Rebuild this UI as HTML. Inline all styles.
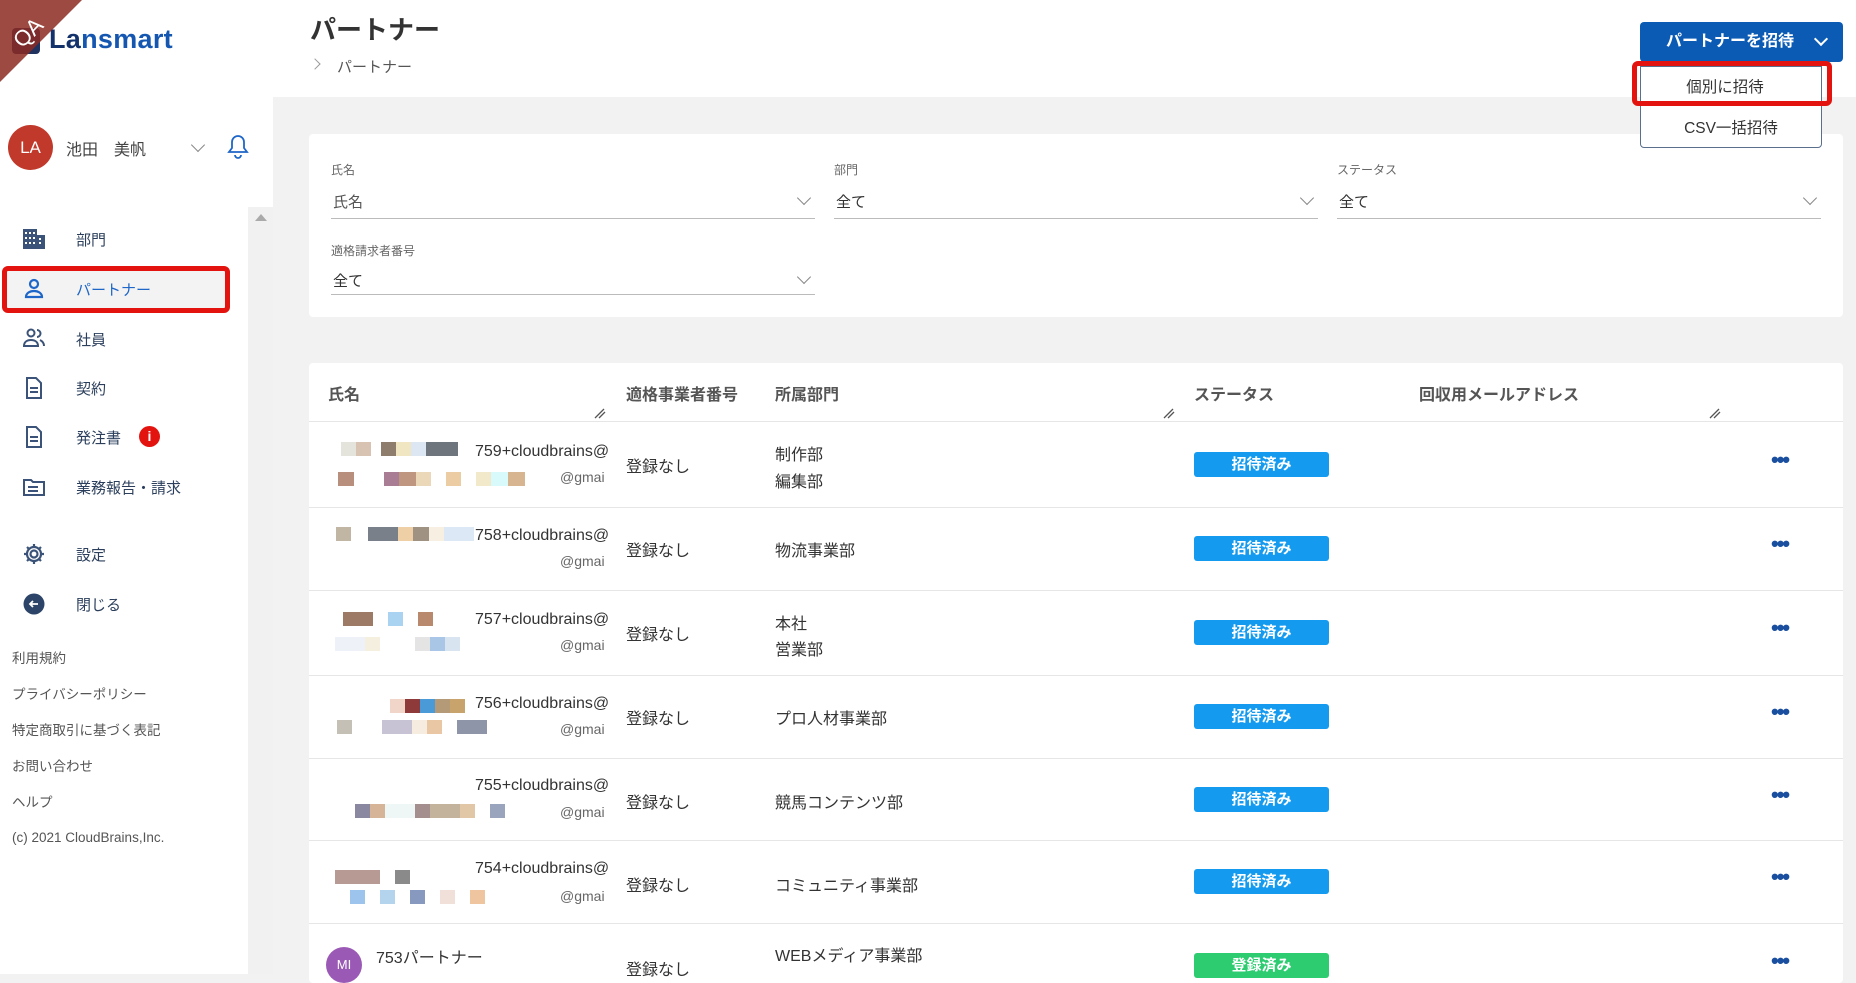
<!DOCTYPE html>
<html><head><meta charset="utf-8"><style>
*{margin:0;padding:0;box-sizing:border-box}
body{width:1856px;height:974px;overflow:hidden;background:#f2f2f2;font-family:"Liberation Sans","Noto Sans CJK JP",sans-serif;color:#333;position:relative}
.a{position:absolute}
.side{left:0;top:0;width:273px;height:974px;background:#fff}
.scroll{left:248px;top:207px;width:25px;height:767px;background:#f1f1f1}
.nav{left:76px;font-size:15px;color:#2b3f5c}
.ic{left:22px;width:24px;height:24px}
.foot{left:12px;font-size:13.5px;color:#555}
.top{left:273px;top:0;width:1583px;height:97px;background:#fff}
.card{background:#fff;border-radius:4px}
.lbl{font-size:12px;color:#666}
.sel{font-size:15px;color:#333}
.line{height:1px;background:#bbb}
.chev{width:10px;height:10px;border-right:1.5px solid #888;border-bottom:1.5px solid #888;transform:rotate(45deg)}
.th{top:381px;font-size:16px;font-weight:bold;color:#555}
.rb{left:309px;width:1534px;height:1px;background:#e6e6e6}
.td{font-size:16px;color:#333}
.badge{left:1194px;width:135px;height:25px;background:#149bf0;border-radius:3px;color:#fff;font-weight:bold;font-size:15px;text-align:center;line-height:25px}
.dots{left:1771px;font-size:22px;color:#1a4fa0;font-weight:bold;letter-spacing:-2px}
.bl{height:14px;display:inline-block}
.z{z-index:5}
</style></head><body>
<div class="a side"></div>
<div class="a scroll"></div>
<div class="a" style="left:255px;top:214px;width:0;height:0;border-left:6px solid transparent;border-right:6px solid transparent;border-bottom:7px solid #aaa"></div>
<div class="a" style="left:12px;top:28px;width:28px;height:26px;background:#1f3260;border-radius:4px"></div>
<div class="a" style="left:49px;top:24px;font-size:27px;font-weight:bold;color:#133a7a;letter-spacing:0.3px"><span style="color:#13316a">La</span><span style="color:#1557b0">nsmart</span></div>
<svg class="a" style="left:0;top:0" width="82" height="82"><polygon points="0,0 82,0 0,82" fill="#8c2a22" opacity="0.85"/><text x="6" y="40" transform="rotate(-45 25 25)" fill="#fff" font-size="22" font-family="Liberation Sans">QA</text></svg>
<div class="a" style="left:8px;top:125px;width:45px;height:45px;border-radius:50%;background:#c0392b;color:#fff;font-size:17px;text-align:center;line-height:45px">LA</div>
<div class="a" style="left:66px;top:136px;font-size:16px;color:#444">池田　美帆</div>
<div class="a chev" style="left:193px;top:140px"></div>
<svg class="a" style="left:224px;top:131px" width="28" height="30" fill="none" stroke="#1e66c8" stroke-width="1.8"><path d="M5 21h18l-3-4v-6a6 6 0 0 0-12 0v6z"/><path d="M11 24a3 3 0 0 0 6 0"/></svg>
<svg class="a ic" style="top:227px" viewBox="0 0 24 24" fill="#3b5378"><rect x="1" y="2" width="14" height="20"/><rect x="15" y="8" width="8" height="14"/><g fill="#fff"><rect x="3" y="5" width="2" height="2"/><rect x="7" y="5" width="2" height="2"/><rect x="11" y="5" width="2" height="2"/><rect x="3" y="10" width="2" height="2"/><rect x="7" y="10" width="2" height="2"/><rect x="11" y="10" width="2" height="2"/><rect x="3" y="15" width="2" height="2"/><rect x="7" y="15" width="2" height="2"/><rect x="11" y="15" width="2" height="2"/><rect x="17" y="11" width="2" height="2"/><rect x="17" y="15" width="2" height="2"/></g></svg>
<div class="a nav" style="top:229px">部門</div>
<div class="a" style="left:2px;top:266px;width:228px;height:47px;border:5px solid #e3140f;border-radius:6px;background:#f3f3f3"></div>
<svg class="a ic" style="top:277px" viewBox="0 0 24 24" fill="none" stroke="#1e66c8" stroke-width="2.2"><circle cx="12" cy="7" r="4"/><path d="M4 20c0-4 4-6 8-6s8 2 8 6z"/></svg>
<div class="a nav" style="top:279px;color:#1e66c8">パートナー</div>
<svg class="a ic" style="top:326px" viewBox="0 0 24 24" fill="none" stroke="#3b5378" stroke-width="2"><circle cx="9" cy="7" r="3.5"/><path d="M2 20c0-4 3-6 7-6s7 2 7 6z"/><path d="M15 4a3.5 3.5 0 0 1 0 7M18 14c2 1 4 3 4 6"/></svg>
<div class="a nav" style="top:329px">社員</div>
<svg class="a ic" style="top:376px" viewBox="0 0 24 24" fill="none" stroke="#3b5378" stroke-width="2"><path d="M5 2h9l5 5v15H5z"/><path d="M8 12h8M8 16h8"/></svg>
<div class="a nav" style="top:378px">契約</div>
<svg class="a ic" style="top:425px" viewBox="0 0 24 24" fill="none" stroke="#3b5378" stroke-width="2"><path d="M5 2h9l5 5v15H5z"/><path d="M8 12h8M8 16h8"/></svg>
<div class="a nav" style="top:427px">発注書</div>
<div class="a" style="left:139px;top:426px;width:21px;height:21px;border-radius:50%;background:#e3140f;color:#fff;font-size:14px;font-weight:bold;text-align:center;line-height:21px">i</div>
<svg class="a ic" style="top:475px" viewBox="0 0 24 24" fill="none" stroke="#3b5378" stroke-width="2"><path d="M2 5h7l2 2h11v13H2z"/><path d="M6 12h10M6 16h10"/></svg>
<div class="a nav" style="top:477px">業務報告・請求</div>
<svg class="a ic" style="top:542px" viewBox="0 0 24 24" fill="none" stroke="#3b5378" stroke-width="2.2"><circle cx="12" cy="12" r="3.5"/><path d="M12 2v3M12 19v3M2 12h3M19 12h3M5 5l2 2M17 17l2 2M5 19l2-2M17 7l2-2"/><circle cx="12" cy="12" r="7"/></svg>
<div class="a nav" style="top:544px">設定</div>
<svg class="a ic" style="top:592px" viewBox="0 0 24 24"><circle cx="12" cy="12" r="10.5" fill="#2b4468"/><path d="M16 12H8M11 9l-3 3 3 3" stroke="#fff" stroke-width="1.8" fill="none"/></svg>
<div class="a nav" style="top:594px">閉じる</div>
<div class="a foot" style="top:647px">利用規約</div>
<div class="a foot" style="top:683px">プライバシーポリシー</div>
<div class="a foot" style="top:719px">特定商取引に基づく表記</div>
<div class="a foot" style="top:755px">お問い合わせ</div>
<div class="a foot" style="top:791px">ヘルプ</div>
<div class="a foot" style="top:830px">(c) 2021 CloudBrains,Inc.</div>
<div class="a top"></div>
<div class="a" style="left:310px;top:10px;font-size:26px;font-weight:bold;color:#333">パートナー</div>
<div class="a" style="left:311px;top:60px;width:8px;height:8px;border-right:1.5px solid #999;border-top:1.5px solid #999;transform:rotate(45deg)"></div>
<div class="a" style="left:337px;top:56px;font-size:15px;color:#555">パートナー</div>
<div class="a z" style="left:1640px;top:22px;width:203px;height:40px;background:#0b5bb5;border-radius:4px;color:#fff;font-weight:bold;font-size:16px;line-height:40px;padding-left:26px">パートナーを招待</div>
<div class="a z" style="left:1816px;top:34px;width:10px;height:10px;border-right:2px solid #fff;border-bottom:2px solid #fff;transform:rotate(45deg)"></div>
<div class="a z" style="left:1640px;top:66px;width:182px;height:82px;background:#fff;border:1px solid #5a6f8c;border-radius:0 0 4px 4px"></div>
<div class="a z" style="left:1632px;top:61px;width:200px;height:45px;border:5px solid #e3140f;border-radius:6px"></div>
<div class="a z" style="left:1640px;top:75px;width:170px;text-align:center;font-size:15.5px;color:#333">個別に招待</div>
<div class="a z" style="left:1640px;top:116px;width:182px;text-align:center;font-size:15.5px;color:#333">CSV一括招待</div>
<div class="a card" style="left:309px;top:134px;width:1534px;height:183px"></div>
<div class="a lbl" style="left:331px;top:161px">氏名</div><div class="a sel" style="left:333px;top:191px;color:#555">氏名</div><div class="a line" style="left:331px;top:218px;width:484px"></div><div class="a chev" style="left:799px;top:193px"></div>
<div class="a lbl" style="left:834px;top:161px">部門</div><div class="a sel" style="left:836px;top:191px">全て</div><div class="a line" style="left:834px;top:218px;width:484px"></div><div class="a chev" style="left:1302px;top:193px"></div>
<div class="a lbl" style="left:1337px;top:161px">ステータス</div><div class="a sel" style="left:1339px;top:191px">全て</div><div class="a line" style="left:1337px;top:218px;width:484px"></div><div class="a chev" style="left:1805px;top:193px"></div>
<div class="a lbl" style="left:331px;top:242px">適格請求者番号</div><div class="a sel" style="left:333px;top:270px">全て</div><div class="a line" style="left:331px;top:294px;width:484px"></div><div class="a chev" style="left:799px;top:272px"></div>
<div class="a card" style="left:309px;top:363px;width:1534px;height:620px"></div>
<div class="a th" style="left:328px">氏名</div>
<div class="a th" style="left:626px">適格事業者番号</div>
<div class="a th" style="left:775px">所属部門</div>
<div class="a th" style="left:1194px">ステータス</div>
<div class="a th" style="left:1419px">回収用メールアドレス</div>
<svg class="a" style="left:593px;top:407px" width="14" height="12" stroke="#555" stroke-width="1.3"><path d="M2 11l9-9M6 11l6-6"/></svg>
<svg class="a" style="left:1162px;top:407px" width="14" height="12" stroke="#555" stroke-width="1.3"><path d="M2 11l9-9M6 11l6-6"/></svg>
<svg class="a" style="left:1708px;top:407px" width="14" height="12" stroke="#555" stroke-width="1.3"><path d="M2 11l9-9M6 11l6-6"/></svg>
<div class="a rb" style="top:421px"></div>
<div class="a rb" style="top:507px"></div>
<div class="a rb" style="top:590px"></div>
<div class="a rb" style="top:675px"></div>
<div class="a rb" style="top:758px"></div>
<div class="a rb" style="top:840px"></div>
<div class="a rb" style="top:923px"></div>

<div class="a" style="left:341px;top:442px"><span class="bl" style="width:15px;background:#e4e4dd"></span><span class="bl" style="width:15px;background:#d8c3b3"></span><span class="bl" style="width:10px"></span><span class="bl" style="width:15px;background:#8e7d6d"></span><span class="bl" style="width:15px;background:#f0e6c1"></span><span class="bl" style="width:15px;background:#dde7f3"></span><span class="bl" style="width:32px;background:#6f757d"></span></div>
<div class="a td" style="left:475px;top:443px">759+cloudbrains@</div>
<div class="a" style="left:338px;top:472px"><span class="bl" style="width:16px;background:#b88f7d"></span><span class="bl" style="width:30px"></span><span class="bl" style="width:15px;background:#a97d94"></span><span class="bl" style="width:17px;background:#bf967f"></span><span class="bl" style="width:15px;background:#ead8b8"></span><span class="bl" style="width:15px"></span><span class="bl" style="width:15px;background:#eccca2"></span><span class="bl" style="width:15px"></span><span class="bl" style="width:15px;background:#f2e9cb"></span><span class="bl" style="width:17px;background:#d8fafa"></span><span class="bl" style="width:17px;background:#d8b591"></span></div>
<div class="a" style="left:560px;top:469px;font-size:14px;color:#666">@gmai</div>
<div class="a td" style="left:626px;top:453px">登録なし</div>
<div class="a td" style="left:775px;top:441px">制作部</div>
<div class="a td" style="left:775px;top:468px">編集部</div>
<div class="a badge" style="top:452px">招待済み</div>
<div class="a dots" style="top:447px">•••</div>
<div class="a" style="left:336px;top:527px"><span class="bl" style="width:15px;background:#c1b5a4"></span><span class="bl" style="width:17px"></span><span class="bl" style="width:30px;background:#798089"></span><span class="bl" style="width:15px;background:#efcfa6"></span><span class="bl" style="width:16px;background:#a09282"></span><span class="bl" style="width:15px;background:#f7efe2"></span><span class="bl" style="width:30px;background:#dce8f5"></span></div>
<div class="a td" style="left:475px;top:527px">758+cloudbrains@</div>
<div class="a" style="left:560px;top:553px;font-size:14px;color:#666">@gmai</div>
<div class="a td" style="left:626px;top:537px">登録なし</div>
<div class="a td" style="left:775px;top:537px">物流事業部</div>
<div class="a badge" style="top:536px">招待済み</div>
<div class="a dots" style="top:531px">•••</div>
<div class="a" style="left:343px;top:612px"><span class="bl" style="width:30px;background:#9c7a65"></span><span class="bl" style="width:15px"></span><span class="bl" style="width:15px;background:#a9d3f0"></span><span class="bl" style="width:15px"></span><span class="bl" style="width:15px;background:#b8896d"></span></div>
<div class="a td" style="left:475px;top:611px">757+cloudbrains@</div>
<div class="a" style="left:335px;top:637px"><span class="bl" style="width:30px;background:#eef2f8"></span><span class="bl" style="width:15px;background:#f5efe0"></span><span class="bl" style="width:35px"></span><span class="bl" style="width:15px;background:#e4e4e4"></span><span class="bl" style="width:15px;background:#a9c6e6"></span><span class="bl" style="width:15px;background:#d8e4f0"></span></div>
<div class="a" style="left:560px;top:637px;font-size:14px;color:#666">@gmai</div>
<div class="a td" style="left:626px;top:621px">登録なし</div>
<div class="a td" style="left:775px;top:610px">本社</div>
<div class="a td" style="left:775px;top:636px">営業部</div>
<div class="a badge" style="top:620px">招待済み</div>
<div class="a dots" style="top:615px">•••</div>
<div class="a" style="left:390px;top:699px"><span class="bl" style="width:15px;background:#f1d5c9"></span><span class="bl" style="width:15px;background:#8e3a3a"></span><span class="bl" style="width:15px;background:#4a9ad8"></span><span class="bl" style="width:15px;background:#b59a78"></span><span class="bl" style="width:15px;background:#c8a36c"></span></div>
<div class="a td" style="left:475px;top:695px">756+cloudbrains@</div>
<div class="a" style="left:337px;top:720px"><span class="bl" style="width:15px;background:#c5c0b5"></span><span class="bl" style="width:30px"></span><span class="bl" style="width:30px;background:#c7c3d4"></span><span class="bl" style="width:15px;background:#f6ece0"></span><span class="bl" style="width:15px;background:#e9c7a4"></span><span class="bl" style="width:15px"></span><span class="bl" style="width:30px;background:#8f95a8"></span></div>
<div class="a" style="left:560px;top:721px;font-size:14px;color:#666">@gmai</div>
<div class="a td" style="left:626px;top:705px">登録なし</div>
<div class="a td" style="left:775px;top:705px">プロ人材事業部</div>
<div class="a badge" style="top:704px">招待済み</div>
<div class="a dots" style="top:699px">•••</div>
<div class="a td" style="left:475px;top:777px">755+cloudbrains@</div>
<div class="a" style="left:355px;top:804px"><span class="bl" style="width:15px;background:#8a87a0"></span><span class="bl" style="width:15px;background:#d6b497"></span><span class="bl" style="width:30px;background:#eef6f6"></span><span class="bl" style="width:15px;background:#a58e8e"></span><span class="bl" style="width:30px;background:#c4b39c"></span><span class="bl" style="width:15px;background:#e2c7a6"></span><span class="bl" style="width:15px"></span><span class="bl" style="width:15px;background:#9aa5bd"></span></div>
<div class="a" style="left:560px;top:804px;font-size:14px;color:#666">@gmai</div>
<div class="a td" style="left:626px;top:789px">登録なし</div>
<div class="a td" style="left:775px;top:789px">競馬コンテンツ部</div>
<div class="a badge" style="top:787px">招待済み</div>
<div class="a dots" style="top:782px">•••</div>
<div class="a" style="left:335px;top:870px"><span class="bl" style="width:45px;background:#b89a94"></span><span class="bl" style="width:15px"></span><span class="bl" style="width:15px;background:#8a8a8a"></span></div>
<div class="a td" style="left:475px;top:860px">754+cloudbrains@</div>
<div class="a" style="left:350px;top:890px"><span class="bl" style="width:15px;background:#9dc4ec"></span><span class="bl" style="width:15px"></span><span class="bl" style="width:15px;background:#b3d4ec"></span><span class="bl" style="width:15px"></span><span class="bl" style="width:15px;background:#8899c0"></span><span class="bl" style="width:15px"></span><span class="bl" style="width:15px;background:#f0e0d9"></span><span class="bl" style="width:15px"></span><span class="bl" style="width:15px;background:#eec59f"></span></div>
<div class="a" style="left:560px;top:888px;font-size:14px;color:#666">@gmai</div>
<div class="a td" style="left:626px;top:872px">登録なし</div>
<div class="a td" style="left:775px;top:872px">コミュニティ事業部</div>
<div class="a badge" style="top:869px">招待済み</div>
<div class="a dots" style="top:864px">•••</div>
<div class="a" style="left:326px;top:947px;width:36px;height:36px;border-radius:50%;background:#9b59b6;color:#fff;font-size:13px;text-align:center;line-height:36px">MI</div>
<div class="a td" style="left:376px;top:944px">753パートナー</div>
<div class="a td" style="left:626px;top:956px">登録なし</div>
<div class="a td" style="left:775px;top:942px">WEBメディア事業部</div>
<div class="a badge" style="top:953px;background:#2ecc71">登録済み</div>
<div class="a dots" style="top:948px">•••</div>
</body></html>
